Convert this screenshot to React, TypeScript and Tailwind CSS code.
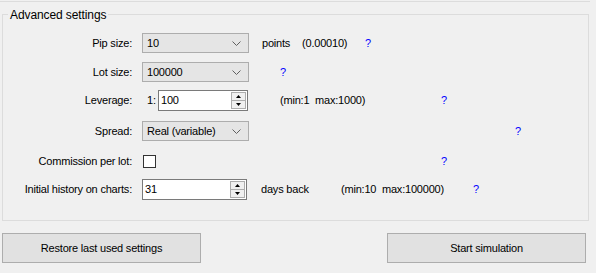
import React from "react";

const Chevron = () => (
  <svg width="9" height="5" viewBox="0 0 9 5" className="shrink-0">
    <path d="M0.5 0.5 L4.5 4.5 L8.5 0.5" fill="none" stroke="#606060" strokeWidth="1" />
  </svg>
);

const Combo = ({ value, width = "w-[107px]" }: { value: string; width?: string }) => (
  <div
    className={`${width} h-[20px] flex items-center justify-between pl-[4px] pr-[7px] bg-[#e5e5e5] border border-[#adadad]`}
  >
    <span>{value}</span>
    <Chevron />
  </div>
);

const Spinner = () => (
  <div className="w-[15px] h-[17px] mr-[1px] flex flex-col border border-[#adadad] bg-[#f0f0f0]">
    <div className="flex-1 flex items-center justify-center border-b border-[#adadad]">
      <svg width="5" height="3" viewBox="0 0 5 3">
        <path d="M0 3 L2.5 0 L5 3 Z" fill="#000" />
      </svg>
    </div>
    <div className="flex-1 flex items-center justify-center">
      <svg width="5" height="3" viewBox="0 0 5 3">
        <path d="M0 0 L2.5 3 L5 0 Z" fill="#000" />
      </svg>
    </div>
  </div>
);

const NumberBox = ({ value, width }: { value: string; width: string }) => (
  <div className={`${width} h-[21px] flex items-center bg-white border border-[#7a7a7a]`}>
    <span className="flex-1 pl-[2px]">{value}</span>
    <Spinner />
  </div>
);

const Help = () => <span className="text-[#0000ff]">?</span>;

const Label = ({ children }: { children: React.ReactNode }) => (
  <span className="w-[129px] pr-[0px] text-right shrink-0">{children}</span>
);

export default function App() {
  return (
    <div
      className="w-[596px] h-[273px] bg-[#f0f0f0] text-black text-[11px] leading-[13px] tracking-[-0.2px] flex flex-col overflow-hidden"
      style={{ fontFamily: '"Liberation Sans", Arial, sans-serif' }}
    >
      {/* edge of the panel above */}
      <div className="h-[1px] mt-[1px] w-[590px] bg-[#dcdcdc]" />

      {/* Advanced settings group */}
      <div className="relative mt-[12px] ml-[2px] w-[587px] h-[207px] border border-[#dcdcdc] flex flex-col">
        <span className="absolute -top-[7px] left-[5px] px-[2px] bg-[#f0f0f0] text-[12px] leading-[14px] tracking-[-0.1px]">
          Advanced settings
        </span>

        {/* Pip size */}
        <div className="mt-[18px] h-[20px] flex items-center">
          <Label>Pip size:</Label>
          <div className="ml-[10px]">
            <Combo value="10" />
          </div>
          <span className="ml-[13px] w-[40px]">points</span>
          <span className="w-[63px]">(0.00010)</span>
          <Help />
        </div>

        {/* Lot size */}
        <div className="mt-[9px] h-[20px] flex items-center">
          <Label>Lot size:</Label>
          <div className="ml-[10px]">
            <Combo value="100000" />
          </div>
          <span className="ml-[31px]">
            <Help />
          </span>
        </div>

        {/* Leverage */}
        <div className="mt-[8px] h-[21px] flex items-center">
          <Label>Leverage:</Label>
          <span className="ml-[15px] w-[11px]">1:</span>
          <NumberBox value="100" width="w-[90px]" />
          <span className="ml-[32px] w-[161px] whitespace-pre">(min:1  max:1000)</span>
          <Help />
        </div>

        {/* Spread */}
        <div className="mt-[10px] h-[20px] flex items-center">
          <Label>Spread:</Label>
          <div className="ml-[10px]">
            <Combo value="Real (variable)" />
          </div>
          <span className="ml-[266px]">
            <Help />
          </span>
        </div>

        {/* Commission per lot */}
        <div className="mt-[10px] h-[20px] flex items-center">
          <Label>Commission per lot:</Label>
          <div className="ml-[11px] w-[13px] h-[13px] bg-white border border-[#333333]" />
          <span className="ml-[285px]">
            <Help />
          </span>
        </div>

        {/* Initial history on charts */}
        <div className="mt-[8px] h-[21px] flex items-center">
          <Label>Initial history on charts:</Label>
          <div className="ml-[10px]">
            <NumberBox value="31" width="w-[105px]" />
          </div>
          <span className="ml-[14px] w-[80px]">days back</span>
          <span className="w-[132px] whitespace-pre">(min:10  max:100000)</span>
          <Help />
        </div>
      </div>

      {/* Buttons */}
      <div className="mt-[12px] pl-[2px] pr-[10px] flex justify-between">
        <button className="w-[199px] h-[30px] bg-[#e1e1e1] border border-[#adadad] text-[11px]">
          Restore last used settings
        </button>
        <button className="w-[199px] h-[30px] bg-[#e1e1e1] border border-[#adadad] text-[11px]">
          Start simulation
        </button>
      </div>
    </div>
  );
}
